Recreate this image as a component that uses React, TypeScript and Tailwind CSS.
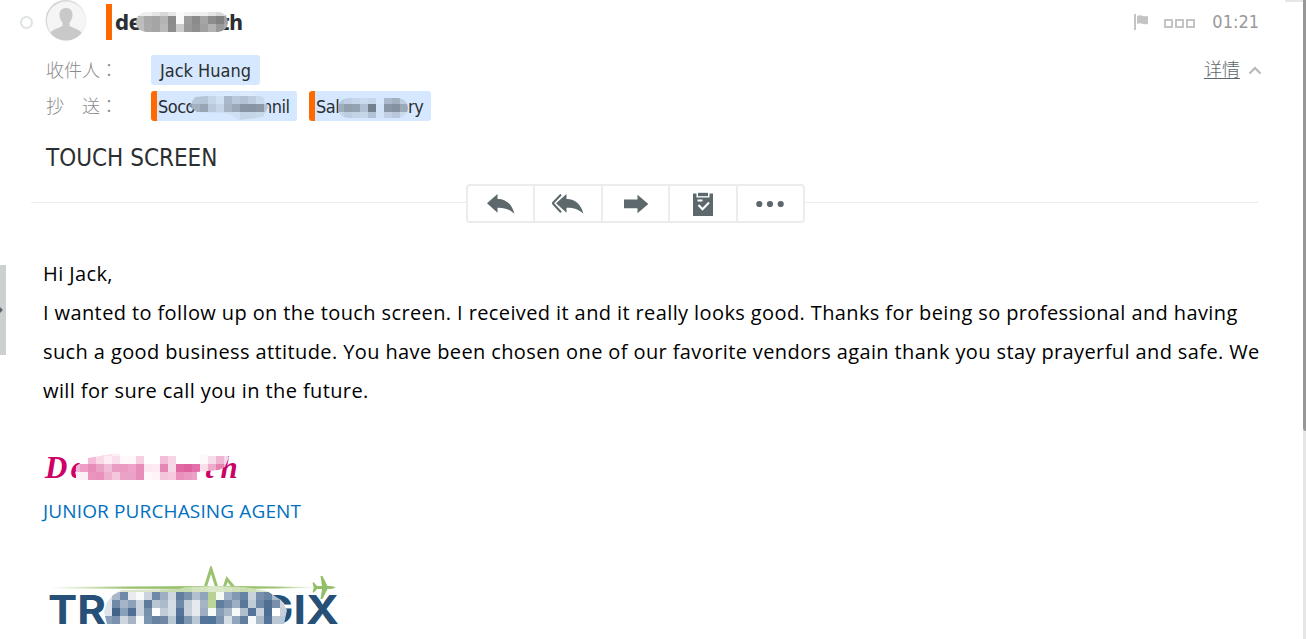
import React from "react";

type MosaicProps = {
  rows: string[];
  width: number;
  height: number;
  offsetX?: number;
  offsetY?: number;
  className?: string;
};

// Every row is a space separated list of hex colours, one per 8px block
const Mosaic = ({ rows, width, height, offsetX = 0, offsetY = 0, className = "" }: MosaicProps) => (
  <svg width={width} height={height} viewBox={`${offsetX} ${offsetY} ${width} ${height}`} shapeRendering="crispEdges" className={`relative shrink-0 ${className}`}>
    {rows.map((row, y) =>
      row.split(" ").map((fill, x) => <rect key={`${x}-${y}`} x={x * 8} y={y * 8} width="8" height="8" fill={`#${fill}`} />)
    )}
  </svg>
);

const SENDER = [
  "eee eee e4e4e4 d8d8d8 e6e6e6 fafafa f2f2f2 eee eee e4e4e4 d8d8d8 e0e0e0",
  "bdbdbd a9a9a9 a5a5a5 b4b4b4 8b8b8b fafafa 9c9c9c 8b8b8b a5a5a5 8d8d8d 828282 a0a0a0",
  "bfbfbf aaaaaa a5a5a5 b9b9b9 8d8d8d cccccc 999999 8f8f8f a0a0a0 b2b2b2 999999 aaaaaa",
];

const CC_FIRST = [
  "cfe2f7 d6e6fa d6e7fb d8e8fb dcebfd dcebfd d8e8fb dcebfd dcebfd d6e7fb d6e7fb",
  "c9d8ea b7c7da b5c5d8 c5d6e9 d0e1f5 a9b8ca b9c9dc b3c3d5 bdcde0 c9d9ec d0e0f4",
  "8b98a8 a2b0c1 98a5b5 bac9dc c6d6ea a6b4c5 9aa8b8 8795a5 8794a4 8b98a8 b4c3d5",
  "d0e0f4 d0e0f4 d0e0f4 d0e0f4 d0e0f4 d0e0f4 d0e0f4 c5d5e8 c5d5e8 c9d9ec d0e0f4",
];

const CC_SECOND = [
  "b8c7da c0cfe3 c6d6ea cadbee c6d6ea d6e7fb a9b8ca a2b0c0 bdcce0 c4d4e7",
  "9fadbd 929fae 95a2b2 b1c0d2 74808e d2e3f7 8996a6 8491a1 9baabb a3b1c3",
  "c4d4e7 bdcde0 c4d4e7 c5d6e9 b3c2d5 d2e3f7 c0cfe3 b8c8da cadbee c6d6ea",
];

const SIGNATURE = [
  "fff fff fff f5c6dc fadeeb fceff6 fff fff fff fff fff fff fff fff fff fff fef8fb fff fff fff",
  "fff fff f5bad7 f9d9e8 fdeef5 f9dfeb fff9fc fef8fb f7cfe1 fff fff f3bdd7 f7d5e5 fff fff fff fef8fb f7dce9 f0b5d2 f7d9e7",
  "f0b5d2 ef9fc6 e88db9 eaa3c5 f1bdd6 ea9dc3 eb9ac1 efa3c8 e88db9 fce8f1 fdeaf2 e586b5 f6d9e7 e069a3 de62a0 e26faa fadfeb efabcb e383b2 f2b9d4",
  "fceff6 fceff6 eb94be e990bc efafce f3c7dc eba2c7 eba2c7 e88db9 fef8fb fdf3f8 f4c5dc f7cadf e990bc ea99c1 eca0c6 f6cde0 fff fff fff",
];

const LOGO = [
  "dbe6c9 dbe6c9 dbe6c9 dbe6c9 dbe6c9 dbe6c9 dbe6c9 cbdcb7 c8dcb1 c8dcb1 c8dcb1 d2e3be d3e4bf dbe9c9 dbe9c9 d5e5c2 cfe0b9 c9ddb0 cfe0b9 d9e7ca dce8cc dce8cc dce8cc",
  "dde2e8 aab8c9 6f89a8 e8ecf0 f9fafa cbd4de 6f89a8 9eafc4 cfd8e1 617e9f 7c93ae b1bfce 90a5bc b7d293 f5faf3 9eb1c6 8399b3 6884a4 c9d2dd 7890ac 6884a4 acbaca dce1e7",
  "dfe4ea 6f89a8 a5b4c7 8da2ba cbd4de 5f7b9c b9c6d3 acbbca d5dde5 6f89a8 c5cfda e6eaee a5b5c6 bbd59a 617e9f 778faa 9dafc4 587799 c0ccd8 6e88a7 506f93 7890ac cad3dd",
  "dfe4ea 426488 89a0b9 516f94 cbd4de 7790ab ffffff c2ccd8 d4dce4 56749a c7d0db e6eaee 9daec2 f6faf6 899fb8 a9b8c9 f6f9fa afbfce 56749a cbd4de 4f6e93 ffffff c6cfda",
  "8ba0b7 7a92ad cdd5df a5b5c6 f8f9fa 7b94af 6882a2 7088a6 bac7d4 4b6b91 7f96b0 bac7d4 56749a 50759a 7b94af d5dde5 91a6bc 617e9f f8f9fa acbaca 56749a bac7d4 bac7d4",
];

const Reply = ({ all = false }: { all?: boolean }) => (
  <svg width={all ? 32 : 28} height="20" viewBox={all ? "-4 0 32 20" : "0 0 28 20"} fill="#5c686c">
    <path d="M0 9.3 10.5 0v5.1C19.4 5 25 10.5 27.4 19.7 22.5 15 17 13.5 10.5 13.7v5.1Z" />
    {all && <path d="m7.600 0-9 9.300 9 9.200" fill="none" stroke="#fff" strokeWidth="1.6" />}
    {all && <path d="m5 .5-8.300 8.800 8.300 9" fill="none" stroke="#5c686c" strokeWidth="2" />}
  </svg>
);

const Forward = () => (
  <svg width="26" height="20" viewBox="0 0 26 20" fill="#5c686c">
    <path d="M1 5.5h13.5V.7L25.3 10l-10.8 9.3v-5H1Z" />
  </svg>
);

const Task = () => (
  <svg width="20" height="24" viewBox="0 0 20 24">
    <path d="M0 1.5h20V24H0Z" fill="#5c686c" />
    <path d="M3.5 0h13v5.5h-13Z" fill="#fff" />
    <path d="M5 .8h10v3.400H5Z" fill="#5c686c" />
    <path d="M4.5 8.5h5M5.5 13l4 4.3 6.5-6.8" fill="none" stroke="#fff" strokeWidth="2" />
  </svg>
);

const More = () => (
  <svg width="28" height="8" viewBox="0 0 28 8" fill="#5c686c">
    <circle cx="3.3" cy="4" r="3.1" />
    <circle cx="14" cy="4" r="3.1" />
    <circle cx="24.7" cy="4" r="3.1" />
  </svg>
);

const ACTIONS = [<Reply />, <Reply all />, <Forward />, <Task />, <More />];

const BODY = [
  "Hi Jack,",
  "I wanted to follow up on the touch screen. I received it and it really looks good. Thanks for being so professional and having",
  "such a good business attitude. You have been chosen one of our favorite vendors again thank you stay prayerful and safe. We",
  "will for sure call you in the future.",
];

const Header = () => (
  <header className="flex h-[44px] items-start pl-5 pr-12">
    <span className="mt-4 size-[13px] rounded-full border-2 border-[#dfe3e4]" />
    <svg width="42" height="42" viewBox="0 0 42 42" className="ml-[12px] shrink-0">
      <defs>
        <linearGradient id="ring" x1="0" y1="0" x2="1" y2="1">
          <stop offset="0" stopColor="#c8c8c8" />
          <stop offset=".6" stopColor="#eeeeee" />
          <stop offset="1" stopColor="#f6f6f6" />
        </linearGradient>
        <clipPath id="disc">
          <circle cx="21" cy="20.5" r="20" />
        </clipPath>
      </defs>
      <circle cx="21" cy="20.5" r="19.7" fill="#f5f5f5" stroke="url(#ring)" strokeWidth="1.4" />
      <path d="M21 8c4.500 0 6.800 3 6.500 7.500-.3 3.400-1.700 5.400-3 7.200v3c2.500 2.500 10 3 12.200 7.300C33 38 27.500 41 21 41S9 38 5.300 33c2.200-4.300 9.700-4.800 12.200-7.300v-3c-1.300-1.800-2.700-3.800-3-7.200C14.200 11 16.500 8 21 8Z" fill="#c9c9c9" clipPath="url(#disc)" />
    </svg>
    <span className="ml-[19px] mt-1 h-9 w-[6px] bg-[#ff6a00]" />
    <div className="ml-[3px] mt-1 flex h-9 items-center text-[22px] font-bold tracking-[-0.5px] text-[#2b2f31]">
      <span className="w-[21px]">de</span>
      <Mosaic rows={SENDER} width={92} height={20} offsetY={4} className="z-10 rounded-full" />
      <span className="-ml-[8px]">th</span>
    </div>
    <div className="ml-auto flex h-[43px] items-center text-[18px] text-[#999]">
      <svg width="16" height="18" viewBox="0 0 16 18" fill="#c4c4c4">
        <path d="M0 1h2v16H0ZM3 3c4-2.500 6 1.500 11 0v8c-5 1.500-7-2.500-11 0Z" />
      </svg>
      <div className="ml-[14px] mt-[3px] flex gap-[2px]">
        <span className="size-[9px] border-2 border-[#c4c4c4]" />
        <span className="size-[9px] border-2 border-[#c4c4c4]" />
        <span className="size-[9px] border-2 border-[#c4c4c4]" />
      </div>
      <span className="-mr-px ml-[17px]">01:21</span>
    </div>
  </header>
);

const Recipients = () => (
  <div className="flex justify-between pl-[46px] pr-[44px] pt-[11px]">
    <div className="flex flex-col gap-[6px] text-[18px] text-[#2b2f31]">
      <div className="flex h-[30px] items-center">
        <span className="w-[105px] whitespace-pre pb-[2px] font-['Noto_Sans_CJK_JP',sans-serif] text-[18px] font-light text-[#8c8c8c]">收件人：</span>
        <span className="flex h-[30px] w-[109px] items-center justify-center rounded-[3px] bg-[#d6e8ff] pt-px">Jack Huang</span>
      </div>
      <div className="flex h-[30px] items-center">
        <span className="w-[105px] whitespace-pre pb-[2px] font-['Noto_Sans_CJK_JP',sans-serif] text-[18px] font-light text-[#8c8c8c]">抄　送：</span>
        <span className="flex h-[30px] w-[146px] items-center overflow-hidden rounded-[3px] border-l-[6px] border-[#ff6a00] bg-[#d6e8ff] pl-[1px] tracking-[-0.5px]">
          <span className="w-[31px] whitespace-nowrap pt-px">Soco</span>
          <Mosaic rows={CC_FIRST} width={79} height={28} offsetX={5} offsetY={4} className="z-10 [clip-path:polygon(0_14px,6px_5px,40px_2px,60px_0,74px_5px,79px_15px,74px_25px,50px_28px,40px_22px,8px_20px)]" />
          <span className="-ml-[6px] pt-px">nnil</span>
        </span>
        <span className="ml-3 flex h-[30px] w-[122px] items-center overflow-hidden rounded-[3px] border-l-[6px] border-[#ff6a00] bg-[#d6e8ff] pl-[1px] tracking-[-0.5px]">
          <span className="w-[22px] pt-px">Sal</span>
          <Mosaic rows={CC_SECOND} width={70} height={20} offsetX={2} offsetY={2} className="mt-[3px] rounded-full" />
          <span className="pt-px">ry</span>
        </span>
      </div>
    </div>
    <div className="flex h-[30px] items-center">
      <span className="pb-[3px] font-['Noto_Sans_CJK_SC',sans-serif] text-[18px] font-light text-[#5c686c] underline underline-offset-2">详情</span>
      <svg width="14" height="9" viewBox="0 0 14 9" className="ml-2">
        <path d="m1.500 7.500 5.500-5.500 5.500 5.500" fill="none" stroke="#b5b9bb" strokeWidth="2.200" />
      </svg>
    </div>
  </div>
);

const Toolbar = () => (
  <div className="ml-[31px] mr-[48px] flex h-[39px] items-center">
    <div className="mb-[2px] h-px w-[435px] bg-[#ececec]" />
    <div className="flex h-[39px] w-[339px] divide-x-2 divide-[#ececec] rounded-[4px] border-2 border-[#ececec]">
      {ACTIONS.map((icon, i) => (
        <button key={i} className="flex flex-1 items-center justify-center">
          {icon}
        </button>
      ))}
    </div>
    <div className="mb-[2px] h-px flex-1 bg-[#ececec]" />
  </div>
);

const Logo = () => (
  <div className="relative ml-[45px] h-[73px] w-[300px]">
    <svg width="300" height="73" viewBox="45 566 300 73">
      <defs>
        <linearGradient id="fade" gradientUnits="userSpaceOnUse" x1="50" y1="0" x2="315" y2="0">
          <stop offset="0" stopColor="#9bc26f" stopOpacity="0" />
          <stop offset=".3" stopColor="#9bc26f" />
          <stop offset=".85" stopColor="#9bc26f" />
          <stop offset="1" stopColor="#9bc26f" stopOpacity="0" />
        </linearGradient>
      </defs>
      <path d="M50 587 200 586h40l73 1v.9L240 589h-40l-150-.6Z" fill="url(#fade)" />
      <path d="m205 588 6-19 6 19M224 588l3-9 7 8.500" fill="none" stroke="#9bc26f" strokeWidth="3" />
      <g fill="#265078" fontFamily="Inter, sans-serif" fontWeight="700" fontSize="40">
        <text x="48" y="624" textLength="58" lengthAdjust="spacingAndGlyphs">TR</text>
        <text x="260" y="624" textLength="79" lengthAdjust="spacingAndGlyphs">GIX</text>
      </g>
      <path d="M335.500 587.500c-1.500-1.500-5-1.500-8-1.500l-5-10h-2l1.500 10h-5l-3-3.500h-1.500l1.200 5-1.200 5h1.500l3-3.500h5l-1.500 10h2l5-10c3 0 6.500 0 8-1.500Z" fill="#94bf69" />
    </svg>
    <div className="absolute left-[59px] top-[20px]">
      <Mosaic
        rows={LOGO}
        width={183}
        height={38}
        offsetY={2}
        className="[clip-path:polygon(0_26px,3px_16px,9px_9px,18px_4px,75px_3px,82px_1px,110px_0,140px_1px,163px_5px,177px_14px,183px_24px,180px_38px,3px_38px)]"
      />
    </div>
  </div>
);

const App = () => {
  return (
    <main className="relative h-[639px] w-[1306px] overflow-hidden bg-white font-['DejaVu_Sans_Condensed','DejaVu_Sans',sans-serif] [font-stretch:condensed]">
      <Header />
      <Recipients />
      <h1 className="flex h-[63px] items-center pl-[46px] pt-[11px] text-[24px] text-[#2b2f31]">TOUCH SCREEN</h1>
      <Toolbar />

      <article className="pl-[43px] pt-[31px] font-['Open_Sans',sans-serif] text-[20px] leading-[39px] tracking-[0.39px] text-black [font-stretch:normal]">
        {BODY.map((line) => (
          <p key={line} className="whitespace-nowrap">
            {line}
          </p>
        ))}
      </article>

      <div className="ml-[45px] mt-[38px] flex h-[40px] items-center font-['Liberation_Serif',serif] text-[31px] font-bold italic tracking-[3px] text-[#cc0066]">
        <span className="w-[31px] whitespace-nowrap">De</span>
        <Mosaic
          rows={SIGNATURE}
          width={153}
          height={26}
          offsetX={4}
          offsetY={6}
          className="z-10 -mt-[2px] [clip-path:polygon(0_12px,12px_4px,36px_0,149px_0,153px_3px,149px_13px,143px_16px,121px_18px,121px_26px,0_26px)]"
        />
        <span className="-ml-[24px] tracking-[7px]">th</span>
      </div>
      <div className="ml-[43px] mt-[4px] h-[39px] font-['Open_Sans',sans-serif] text-[19px] leading-[39px] tracking-[0.14px] text-[#0070c0] [font-stretch:normal]">JUNIOR PURCHASING AGENT</div>
      <div className="mt-[35px]">
        <Logo />
      </div>

      {/* Collapsed side panel handle and scrollbar sit over the page edges */}
      <div className="absolute left-0 top-[265px] flex h-[90px] w-[6px] items-center bg-[#cdd0d1]">
        <svg width="3" height="6" viewBox="0 0 3 6">
          <path d="m0 0 3 3-3 3Z" fill="#5c686c" />
        </svg>
      </div>
      <div className="absolute right-[3px] top-0 h-[2px] w-[18px] bg-[#e6e6e6]" />
      <div className="absolute right-0 top-0 h-full w-[3px] bg-[#e6e6e6]">
        <div className="h-[431px] rounded-bl-[3px] bg-[#979797]" />
      </div>
    </main>
  );
};

export default App;
